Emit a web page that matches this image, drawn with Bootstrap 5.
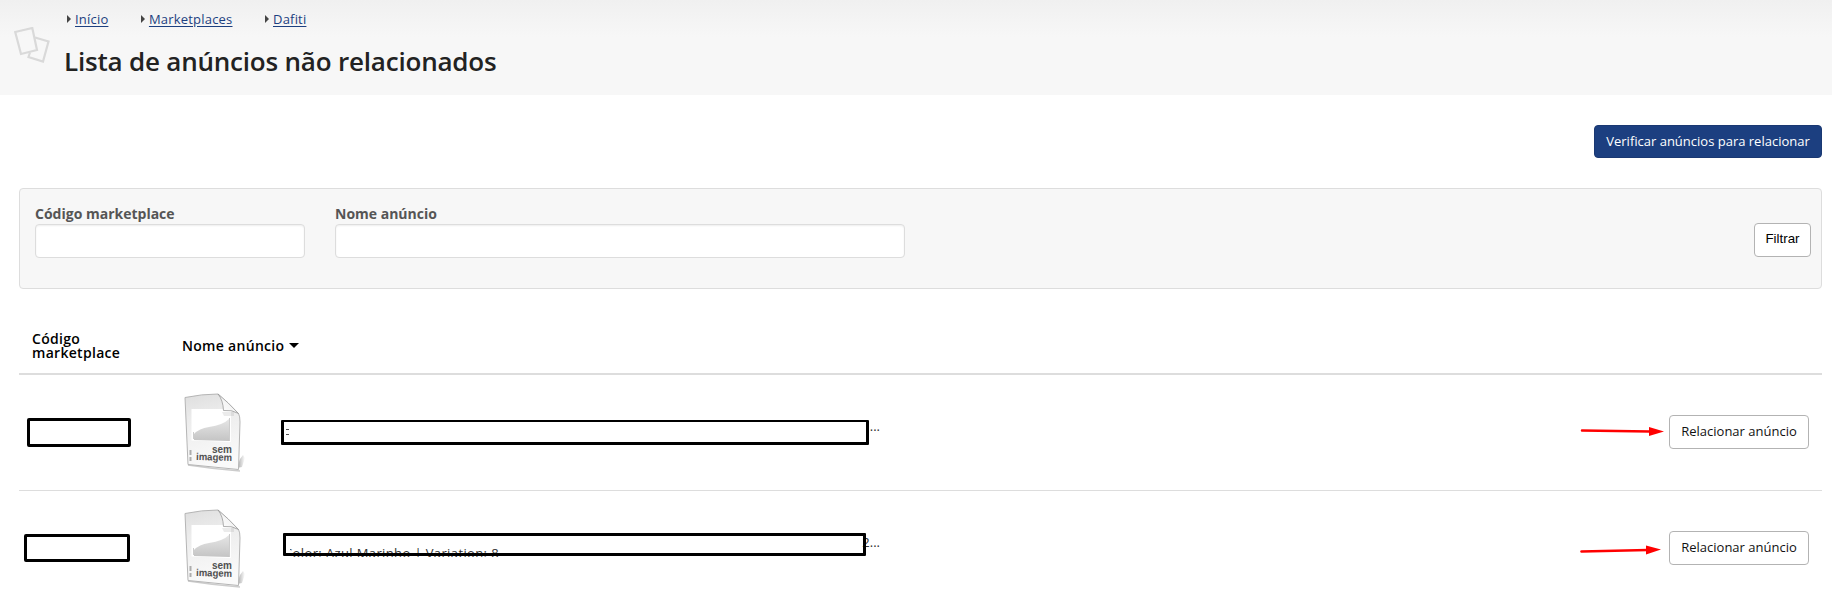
<!DOCTYPE html>
<html lang="pt-BR">
<head>
<meta charset="utf-8">
<meta name="viewport" content="width=device-width, initial-scale=1">
<title>Lista de anúncios não relacionados</title>
<link rel="stylesheet" href="https://cdn.jsdelivr.net/npm/bootstrap@5.3.0/dist/css/bootstrap.min.css">
<style>
body{font-family:"Open Sans",sans-serif;font-size:13px;line-height:18px;color:#333;background:#fff;overflow:hidden}
.page-head{height:95px;background:linear-gradient(#f0f0f0,#f7f7f7 37px);padding-left:14px}
.head-icon{margin-top:27px;width:36px;height:36px}
.head-text{margin-left:14px;padding-top:10px}
.crumbs{margin-left:3px}
.crumbs li{display:flex;align-items:center;height:18px;margin-right:32.5px}
.crumbs svg{margin-right:4px}
.crumbs a{color:#1c3f80;text-underline-offset:2px;letter-spacing:.2px}
.page-head h1{font-size:26px;line-height:36px;font-weight:600;letter-spacing:-.2px;color:#222;margin:15px 0 0}
.page-body{padding:30px 10px 0 19px}
.btn{font-size:13px;line-height:18px;border-radius:4px;height:34px;padding:6px 11px 8px;white-space:nowrap}
.btn-verify{background:#1c3f80;border-color:#1a3872;color:#fff;height:33px;width:228px;padding-left:0;padding-right:0}
.btn-plain{background:#fff;border-color:#b3b3b3;color:#111}
.filter-box{margin-top:30px;height:101px;background:#f7f7f7;border:1px solid #ddd;border-radius:4px;padding:15px 10px 0 15px}
.filter-box label{display:block;font-size:14px;font-weight:700;color:#555;height:20px;line-height:20px}
.filter-box .form-control{height:34px;border-color:#ddd;border-radius:4px;box-shadow:inset 0 1px 2px #eee;padding:0 8px}
.w-code{width:270px;margin-right:30px}.w-name{width:570px}
.btn-filter{font-family:"Liberation Sans",sans-serif;font-size:13.33px;color:#000;width:57px;padding:0 0 2px;line-height:18px;margin-top:19px}
.list-head{height:86px;border-bottom:2px solid #ddd;color:#000;font-size:14px;font-weight:600;letter-spacing:.3px;line-height:14px;padding:29px 0 0 13px}
.col-code{width:150px}
.list-row{height:116px;border-bottom:1px solid #ddd}
.cell-code{width:158px;flex:none}
.mask-code{border:3px solid #000;border-radius:2px;background:#fff}
.thumb{margin:14px 0 0 5px;width:66px;height:86px;flex:none}
.cell-name{width:640px;height:115px;flex:none;position:relative}
.ad-name{position:absolute;left:37px;top:43px;width:595px;text-align:right;line-height:16px}
.ad-more{position:absolute;white-space:nowrap;letter-spacing:.38px;clip-path:inset(3px -2px 5px 6px)}
.mask-name{position:absolute;border:3px solid #000;border-radius:1px}
.arrow{position:relative;flex:none;width:90px;height:20px}
</style>
</head>
<body>
<svg width="0" height="0" class="position-absolute">
  <defs>
    <linearGradient id="paper" x1="0" y1="0" x2="0.2" y2="1"><stop offset="0" stop-color="#dedede"/><stop offset=".35" stop-color="#ececec"/><stop offset="1" stop-color="#fafafa"/></linearGradient>
    <linearGradient id="hill" x1="0" y1="0" x2="0" y2="1"><stop offset="0" stop-color="#e6e6e6"/><stop offset="1" stop-color="#c4c4c4"/></linearGradient>
    <linearGradient id="fold" x1="0" y1="1" x2="1" y2="0"><stop offset="0" stop-color="#fff"/><stop offset=".5" stop-color="#f4f4f4"/><stop offset="1" stop-color="#999"/></linearGradient>
    <linearGradient id="shade" x1="0" y1="0" x2="1" y2="0"><stop offset="0" stop-color="#888"/><stop offset="1" stop-color="#fff"/></linearGradient>
    <symbol id="noimage" viewBox="0 0 66 86">
      <path d="M55 79 L58 70 L61 66 L63 69 L60 78 Z" fill="url(#shade)" opacity=".75"/>
      <path d="M6 76 Q32 80 58 82" stroke="#ccc" stroke-width="1.5" fill="none"/>
      <path d="M3 8.500 Q20 5 36 5 Q46 14 56.500 24.500 Q58 27 58 33 L56.500 80.500 L6 75.500 Z" fill="url(#paper)" stroke="#b5b5b5" stroke-width="1"/>
      <path d="M9.500 20 H49 V53 L9.500 51.500 Z" fill="#fff"/>
      <path d="M12 51 V45 Q17 39.500 27 38 Q41 36 47 30 V52 Z" fill="url(#hill)"/>
      <path d="M11.500 43 V50 M47.500 29 V52" stroke="#ccc" fill="none"/>
      <path d="M36 5 Q41 11 41.500 21.500 Q50 20.500 56.500 24.500 Q46 13 36 5 Z" fill="url(#fold)" stroke="#999" stroke-width=".8"/>
      <path d="M40 23 H52 V27 H42 Z" fill="#999" opacity=".2"/>
      <path d="M8.500 61 V66 M8.500 68 V72" stroke="#888" stroke-width="2" opacity=".65"/>
      <g font-family="Liberation Sans, sans-serif" font-weight="700" fill="#505050" font-size="10">
        <text x="30" y="63.500" textLength="20" lengthAdjust="spacingAndGlyphs">sem</text>
        <text x="14" y="71" textLength="36" lengthAdjust="spacingAndGlyphs" transform="rotate(1.500 14 71)">imagem</text>
      </g>
    </symbol>
  </defs>
</svg>

<header class="page-head d-flex">
  <svg class="head-icon" viewBox="0 0 36 36" fill="none" stroke="#d9d9d9" stroke-width="2.200">
    <path d="M1.200 5 L18.300 1 L23 23 L7 27 Z"/>
    <path d="M21 10.500 L34.500 14.500 L29 34.500 L14.500 30 L16 25.500"/>
  </svg>
  <div class="head-text">
    <ul class="crumbs list-unstyled d-flex mb-0">
      <li><svg width="4" height="8"><path d="M0 0 L4 4 L0 8Z" fill="#444"/></svg><a href="#">Início</a></li>
      <li><svg width="4" height="8"><path d="M0 0 L4 4 L0 8Z" fill="#444"/></svg><a href="#">Marketplaces</a></li>
      <li><svg width="4" height="8"><path d="M0 0 L4 4 L0 8Z" fill="#444"/></svg><a href="#">Dafiti</a></li>
    </ul>
    <h1>Lista de anúncios não relacionados</h1>
  </div>
</header>

<main class="page-body">
  <div class="d-flex justify-content-end"><button class="btn btn-verify">Verificar anúncios para relacionar</button></div>

  <form class="filter-box d-flex">
    <div class="w-code"><label for="code">Código marketplace</label><input id="code" class="form-control"></div>
    <div class="w-name"><label for="name">Nome anúncio</label><input id="name" class="form-control"></div>
    <button type="button" class="btn btn-plain btn-filter ms-auto">Filtrar</button>
  </form>

  <div class="list-head d-flex align-items-center">
    <div class="col-code">Código<br>marketplace</div>
    <div class="d-flex align-items-center">Nome anúncio<svg style="margin-left:5px" width="10" height="5"><path d="M0 0 H10 L5 5Z" fill="#000"/></svg></div>
  </div>

  <div class="list-row d-flex">
    <div class="cell-code"><div class="mask-code" style="width:104px;height:29px;margin:43px 0 0 8px"></div></div>
    <svg class="thumb"><use href="#noimage"/></svg>
    <div class="cell-name">
      <div class="ad-name">...</div>
      <div class="mask-name" style="left:33px;top:45px;width:588px;height:25px;border-top-width:2px"></div>
      <svg class="position-absolute" style="left:38px;top:53px" width="4" height="8"><path d="M0 1.500H3M0 6.500H3" stroke="#555"/></svg>
    </div>
    <svg class="arrow ms-auto" style="margin-top:46px"><path d="M4 9.500 L72 10.500" stroke="red" stroke-width="2.500" stroke-linecap="round"/><path d="M71 6 L86 10.500 L71 15Z" fill="red"/></svg>
    <button class="btn btn-plain" style="width:140px;margin:40px 13px 0 1px">Relacionar anúncio</button>
  </div>

  <div class="list-row d-flex border-0">
    <div class="cell-code"><div class="mask-code" style="width:106px;height:28px;margin:43px 0 0 5px"></div></div>
    <svg class="thumb"><use href="#noimage"/></svg>
    <div class="cell-name">
      <div class="ad-name">2...</div>
      <div class="ad-more" style="left:36px;top:53px">Color: Azul Marinho | Variation: 8</div>
      <div class="mask-name" style="left:35px;top:42px;width:583px;height:23px"></div>
    </div>
    <svg class="arrow ms-auto" style="margin-top:48px"><path d="M3.500 12.500 L70 11" stroke="red" stroke-width="2.500" stroke-linecap="round"/><path d="M68 6.500 L83 10.500 L68 15.500Z" fill="red"/></svg>
    <button class="btn btn-plain" style="width:140px;margin:40px 13px 0 1px">Relacionar anúncio</button>
  </div>
</main>
<script src="https://cdn.jsdelivr.net/npm/bootstrap@5.3.0/dist/js/bootstrap.bundle.min.js"></script>
</body>
</html>
